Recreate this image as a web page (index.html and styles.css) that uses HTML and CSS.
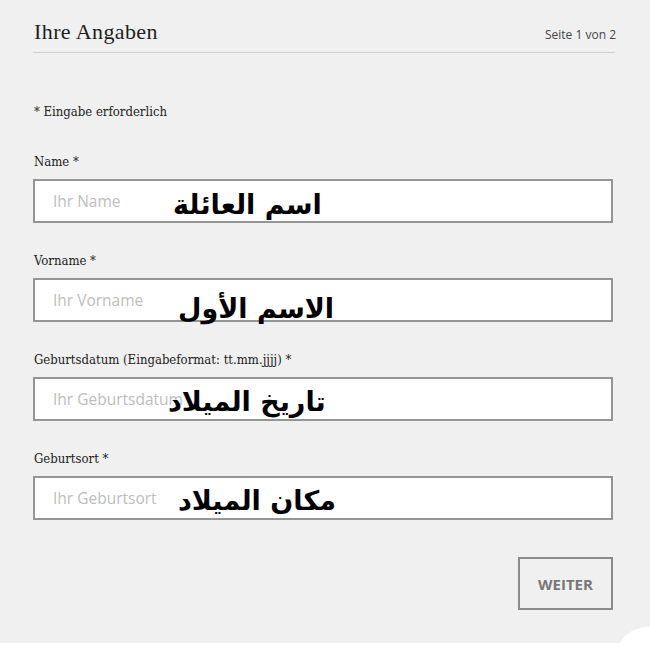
FILE: index.html
```html
<!DOCTYPE html>
<html lang="de">
<head>
<meta charset="utf-8">
<title>Ihre Angaben</title>
<link rel="stylesheet" href="styles.css">
</head>
<body>
<div class="page">
  <div class="form">
    <header class="head">
      <h1 class="title">Ihre Angaben</h1>
      <span class="pager">Seite 1 von 2</span>
    </header>
    <p class="note">* Eingabe erforderlich</p>

    <div class="field">
      <label class="label">Name *</label>
      <div class="box">
        <span class="ph">Ihr Name</span>
        <span class="ar ar1" lang="ar" dir="rtl">اسم العائلة</span>
      </div>
    </div>

    <div class="field">
      <label class="label">Vorname *</label>
      <div class="box">
        <span class="ph">Ihr Vorname</span>
        <span class="ar ar2" lang="ar" dir="rtl">الاسم الأول</span>
      </div>
    </div>

    <div class="field">
      <label class="label">Geburtsdatum (Eingabeformat: tt.mm.jjjj) *</label>
      <div class="box">
        <span class="ph">Ihr Geburtsdatum</span>
        <span class="ar ar3" lang="ar" dir="rtl">تاريخ الميلاد</span>
      </div>
    </div>

    <div class="field">
      <label class="label">Geburtsort *</label>
      <div class="box">
        <span class="ph">Ihr Geburtsort</span>
        <span class="ar ar4" lang="ar" dir="rtl">مكان الميلاد</span>
      </div>
    </div>

    <div class="actions">
      <button class="btn" type="button">WEITER</button>
    </div>
  </div>
  <div class="corner"></div>
</div>
</body>
</html>
```

FILE: styles.css
```css
html, body {
  margin: 0;
  padding: 0;
  background: #ffffff;
}
.page {
  position: relative;
  height: 651px;
  overflow: hidden;
}
.form {
  background: #f0f0f0;
  height: 643px;
  box-sizing: border-box;
  padding: 19px 35px 0 33px;
  display: flex;
  flex-direction: column;
}
.head {
  display: flex;
  justify-content: space-between;
  align-items: baseline;
  border-bottom: 1px solid #cfcfcf;
  padding-bottom: 7px;
}
.title {
  margin: 0 0 0 1px;
  font-family: "Liberation Serif", "DejaVu Serif", serif;
  font-weight: normal;
  font-size: 22px;
  line-height: 26px;
  color: #1e1e1e;
  letter-spacing: 0.4px;
}
.pager {
  font-family: "Open Sans", "Noto Sans", sans-serif;
  font-size: 12px;
  color: #444;
  margin-right: -1px;
}
.note {
  margin: 50px 0 0 1px;
  font-family: "DejaVu Serif Condensed", "Liberation Serif", serif;
  font-size: 13px;
  line-height: 18px;
  color: #222;
}
.field {
  margin-top: 29px;
  display: flex;
  flex-direction: column;
  width: 580px;
}
.note + .field {
  margin-top: 32px;
}
.label {
  margin-left: 1px;
  font-family: "DejaVu Serif Condensed", "Liberation Serif", serif;
  font-size: 13px;
  line-height: 18px;
  color: #222;
}
.box {
  position: relative;
  margin-top: 8px;
  height: 44px;
  box-sizing: border-box;
  border: 2px solid #959595;
  background: #fff;
  display: flex;
  align-items: center;
  padding-left: 18px;
}
.ph {
  font-family: "Open Sans", "Noto Sans", sans-serif;
  font-size: 15.5px;
  color: #bdbdbd;
}
.ar {
  position: absolute;
  font-family: "DejaVu Sans", "Noto Sans", sans-serif;
  font-weight: bold;
  font-size: 27px;
  line-height: 1;
  color: #000;
  white-space: nowrap;
}
.ar1 { left: 138px; top: 10px; }
.ar2 { left: 143px; top: 15px; }
.ar3 { left: 133px; top: 9px; }
.ar4 { left: 143px; top: 9px; }
.actions {
  display: flex;
  justify-content: flex-end;
  margin-top: 37px;
  width: 580px;
}
.btn {
  width: 95px;
  height: 53px;
  background: transparent;
  border: 2px solid #8a8a8a;
  font-family: "Open Sans", "Noto Sans", sans-serif;
  font-weight: bold;
  font-size: 15px;
  color: #787878;
  padding: 0;
}
.corner {
  position: absolute;
  right: -30px;
  bottom: -36px;
  width: 60px;
  height: 60px;
  border-radius: 50%;
  background: #fff;
  border-right: 4px solid #1f4d3a;
}
```
